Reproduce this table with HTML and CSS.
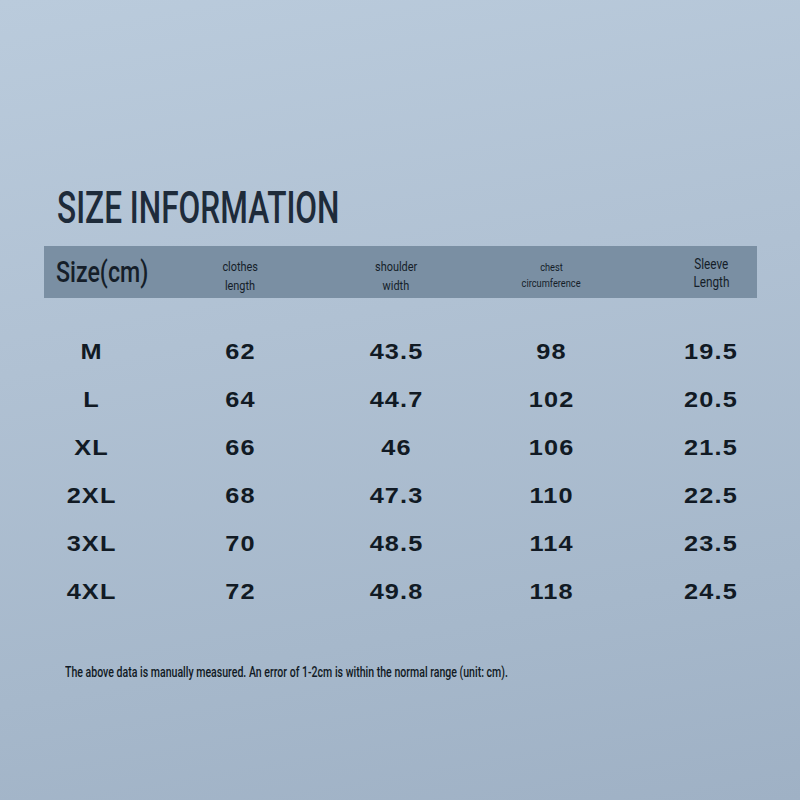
FILE: index.html
```html
<!DOCTYPE html>
<html>
<head>
<meta charset="utf-8">
<link rel="stylesheet" href="styles.css">
</head>
<body>
<div class="page">
  <h1 class="title"><span class="title-text">SIZE INFORMATION</span></h1>
  <div class="bar">
    <div class="cell first"><span class="size-label">Size(cm)</span></div>
    <div class="cell sub"><span>clothes</span><span>length</span></div>
    <div class="cell sub"><span>shoulder</span><span>width</span></div>
    <div class="cell sub small"><span>chest</span><span>circumference</span></div>
    <div class="cell sub big"><span>Sleeve</span><span>Length</span></div>
  </div>
  <div class="rows">
    <div class="row"><div>M</div><div>62</div><div>43.5</div><div>98</div><div class="last">19.5</div></div>
    <div class="row"><div>L</div><div>64</div><div>44.7</div><div>102</div><div class="last">20.5</div></div>
    <div class="row"><div>XL</div><div>66</div><div>46</div><div>106</div><div class="last">21.5</div></div>
    <div class="row"><div>2XL</div><div>68</div><div>47.3</div><div>110</div><div class="last">22.5</div></div>
    <div class="row"><div>3XL</div><div>70</div><div>48.5</div><div>114</div><div class="last">23.5</div></div>
    <div class="row"><div>4XL</div><div>72</div><div>49.8</div><div>118</div><div class="last">24.5</div></div>
  </div>
  <p class="note"><span class="note-text">The above data is manually measured. An error of 1-2cm is within the normal range (unit: cm).</span></p>
</div>
</body>
</html>
```

FILE: styles.css
```css
html, body {
  margin: 0;
  padding: 0;
}
body {
  width: 800px;
  height: 800px;
  overflow: hidden;
}
.page {
  width: 800px;
  height: 800px;
  box-sizing: border-box;
  padding: 186px 43px 0 44px;
  background: linear-gradient(170deg, #bacbdc 0%, #b0c1d3 40%, #a6b8cb 75%, #9fb1c5 100%);
  color: #1c2836;
}
.title, .bar, .note {
  font-family: Roboto, "Liberation Sans", sans-serif;
}
.title {
  margin: 0;
  padding-left: 13px;
  font-size: 44px;
  line-height: 44px;
  font-weight: 500;
  color: #1e2b3a;
  white-space: nowrap;
}
.title-text {
  display: inline-block;
  transform: scaleX(0.718);
  transform-origin: left center;
}
.bar {
  margin-top: 16px;
  height: 52px;
  background: #7a8fa3;
  display: grid;
  grid-template-columns: 94px 204px 108px 202px 105px;
  color: #151e29;
}
.cell {
  display: flex;
  flex-direction: column;
  align-items: center;
  justify-content: center;
  font-size: 13px;
  line-height: 19px;
  white-space: nowrap;
}
.cell.sub {
  padding-top: 7px;
}
.cell.sub span {
  display: inline-block;
  transform: scaleX(0.84);
  transform-origin: center;
}
.cell.first {
  align-items: flex-start;
  padding-left: 12px;
}
.size-label {
  display: inline-block;
  font-size: 29px;
  line-height: 32px;
  font-weight: 500;
  transform: scaleX(0.8);
  transform-origin: left center;
}
.cell.small {
  font-size: 11px;
  line-height: 16px;
}
.cell.big {
  font-size: 14px;
  line-height: 18px;
  padding-left: 13px;
  padding-top: 2px;
}
.rows {
  margin-top: 30px;
}
.row {
  display: grid;
  grid-template-columns: 94px 204px 108px 202px 105px;
  height: 48px;
  align-items: center;
  font-family: "Liberation Sans", Arial, sans-serif;
  font-weight: bold;
  font-size: 22px;
  letter-spacing: 1px;
  color: #111a24;
}
.row > div {
  text-align: center;
  white-space: nowrap;
  text-indent: 1px;
  transform: scaleX(1.15);
  transform-origin: center;
}
.row > div.last {
  padding-left: 13px;
  transform-origin: 60% center;
}
.note {
  margin: 48px 0 0 21px;
  font-size: 14px;
  line-height: 16px;
  font-weight: 500;
  color: #111a24;
  white-space: nowrap;
}
.note-text {
  display: inline-block;
  transform: scaleX(0.754);
  transform-origin: left center;
}
```
